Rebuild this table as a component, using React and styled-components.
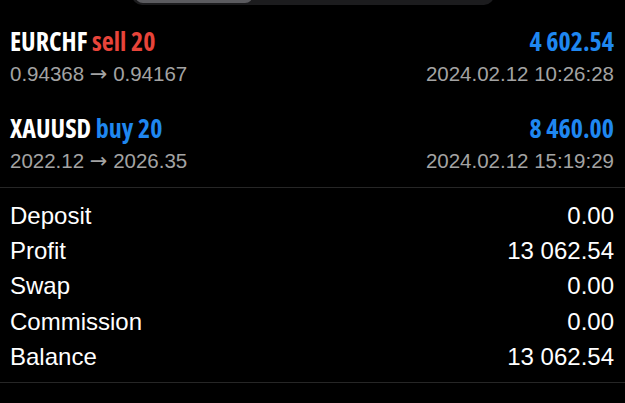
import React from "react";
import styled, { createGlobalStyle } from "styled-components";

const Global = createGlobalStyle`
  html, body { margin: 0; padding: 0; background: #000; }
  body { font-family: "Liberation Sans", Arial, sans-serif; color: #fff; overflow: hidden; }
`;

const Page = styled.div`
  width: 625px;
  height: 403px;
  background: #000;
  overflow: hidden;
`;

const Segmented = styled.div`
  margin: -27px auto 0;
  width: 362px;
  height: 32px;
  box-sizing: border-box;
  padding: 2px 3px;
  border-radius: 10px;
  background: #1c1c1e;
  display: grid;
  grid-template-columns: repeat(3, 1fr);
`;

const Segment = styled.div`
  border-radius: 8px;
  background: ${(p) => (p.$active ? "#5b5b5f" : "transparent")};
`;

const Trades = styled.div`
  margin-top: 8px;
  padding: 0 11px 0 10px;
`;

const Trade = styled.div`
  height: 87px;
  display: grid;
  grid-template-rows: 30px 36px;
  align-content: start;
  padding-top: 13px;
  box-sizing: border-box;
`;

const Line = styled.div`
  display: flex;
  justify-content: space-between;
  align-items: center;
`;

const Condensed = styled.div`
  font-family: "Open Sans", "Liberation Sans", sans-serif;
  font-stretch: 83%;
  font-weight: 700;
  font-size: 26px;
`;

const Title = styled(Condensed)`
  color: #fff;
`;

const Side = styled.span`
  color: ${(p) => (p.$sell ? "#e8443a" : "#1f87f0")};
`;

const Amount = styled(Condensed)`
  color: #1f87f0;
`;

const Sub = styled.div`
  font-size: 20.5px;
  color: #a3a3a3;
`;

const Arrow = styled.span`
  font-family: "DejaVu Sans", sans-serif;
  font-size: 21px;
`;

const Divider = styled.div`
  height: 1px;
  background: #262626;
`;

const Summary = styled.div`
  padding: 10px 11px 8px 10px;
`;

const Row = styled.div`
  height: 35.3px;
  display: flex;
  align-items: center;
  justify-content: space-between;
  font-size: 24px;
  color: #fff;
`;

const trades = [
  { sym: "EURCHF", side: "sell", vol: 20, amount: "4 602.54", from: "0.94368", to: "0.94167", time: "2024.02.12 10:26:28" },
  { sym: "XAUUSD", side: "buy", vol: 20, amount: "8 460.00", from: "2022.12", to: "2026.35", time: "2024.02.12 15:19:29" },
];

const rows = [
  ["Deposit", "0.00"],
  ["Profit", "13 062.54"],
  ["Swap", "0.00"],
  ["Commission", "0.00"],
  ["Balance", "13 062.54"],
];

export default function App() {
  return (
    <Page>
      <Global />
      <Segmented>
        <Segment $active />
        <Segment />
        <Segment />
      </Segmented>
      <Trades>
        {trades.map((t) => (
          <Trade key={t.sym}>
            <Line>
              <Title>
                {t.sym} <Side $sell={t.side === "sell"}>{t.side} {t.vol}</Side>
              </Title>
              <Amount>{t.amount}</Amount>
            </Line>
            <Line>
              <Sub>
                {t.from} <Arrow>→</Arrow> {t.to}
              </Sub>
              <Sub>{t.time}</Sub>
            </Line>
          </Trade>
        ))}
      </Trades>
      <Divider />
      <Summary>
        {rows.map(([k, v]) => (
          <Row key={k}>
            <span>{k}</span>
            <span>{v}</span>
          </Row>
        ))}
      </Summary>
      <Divider />
    </Page>
  );
}
